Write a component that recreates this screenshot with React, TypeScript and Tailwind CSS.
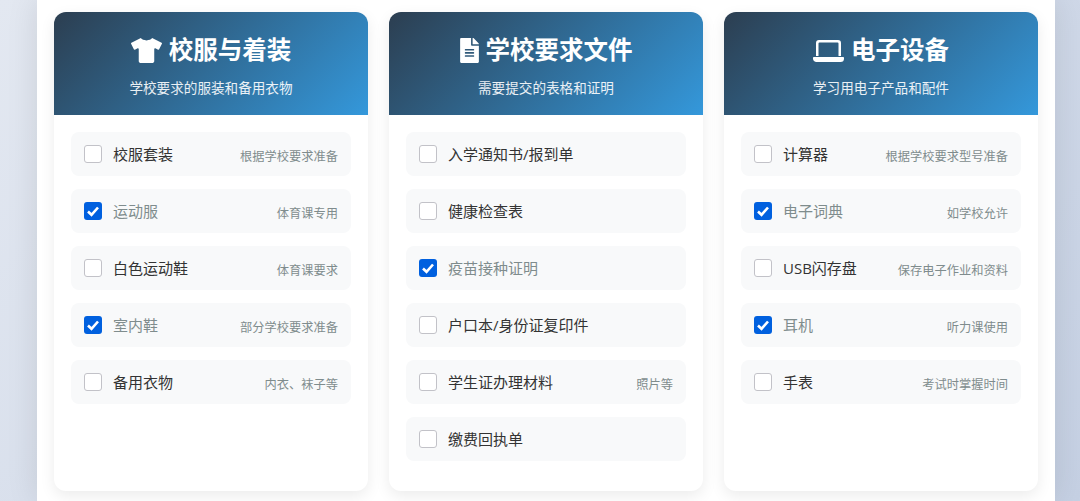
import { FaTshirt, FaFileAlt } from "react-icons/fa";

type Item = { name: string; note?: string; done?: boolean };

function LaptopIcon() {
  return (
    <svg viewBox="0 0 31 22" className="w-[31px] h-[22px] mt-[2px]" fill="currentColor">
      <path d="M6 0h19a3 3 0 0 1 3 3v13h-2.5V3.5a1 1 0 0 0-1-1h-18a1 1 0 0 0-1 1V16H3V3a3 3 0 0 1 3-3z" />
      <path d="M0.8 17h29.4c.45 0 .8.35.8.8v.7a3.5 3.5 0 0 1-3.5 3.5h-24.5A3.5 3.5 0 0 1 0 18.5v-.7c0-.45.35-.8.8-.8z" />
    </svg>
  );
}

const groups = [
  {
    icon: <FaTshirt className="w-[31px] h-[25px]" />,
    title: "校服与着装",
    sub: "学校要求的服装和备用衣物",
    items: [
      { name: "校服套装", note: "根据学校要求准备" },
      { name: "运动服", note: "体育课专用", done: true },
      { name: "白色运动鞋", note: "体育课要求" },
      { name: "室内鞋", note: "部分学校要求准备", done: true },
      { name: "备用衣物", note: "内衣、袜子等" },
    ] as Item[],
  },
  {
    icon: <FaFileAlt className="w-[19px] h-[25px]" />,
    title: "学校要求文件",
    sub: "需要提交的表格和证明",
    items: [
      { name: "入学通知书/报到单" },
      { name: "健康检查表" },
      { name: "疫苗接种证明", done: true },
      { name: "户口本/身份证复印件" },
      { name: "学生证办理材料", note: "照片等" },
      { name: "缴费回执单" },
    ] as Item[],
  },
  {
    icon: <LaptopIcon />,
    title: "电子设备",
    sub: "学习用电子产品和配件",
    items: [
      { name: "计算器", note: "根据学校要求型号准备" },
      { name: "电子词典", note: "如学校允许", done: true },
      { name: "USB闪存盘", note: "保存电子作业和资料" },
      { name: "耳机", note: "听力课使用", done: true },
      { name: "手表", note: "考试时掌握时间" },
    ] as Item[],
  },
];

function Box({ on }: { on?: boolean }) {
  if (on) {
    return (
      <span className="flex items-center justify-center w-[18px] h-[18px] shrink-0 rounded-[3px] bg-[#0060df]">
        <svg viewBox="0 0 18 18" className="w-[18px] h-[18px]" fill="none" stroke="white" strokeWidth="2.6">
          <path d="M4 9.5l3.5 3.3L14 5.5" />
        </svg>
      </span>
    );
  }
  return <span className="w-[18px] h-[18px] shrink-0 rounded-[3px] border border-[#c2c2c8] bg-white" />;
}

function Row({ item }: { item: Item }) {
  return (
    <div className="flex items-center h-11 rounded-lg bg-[#f8f9fa] pl-[13px] pr-[13px]">
      <Box on={item.done} />
      <span className={"ml-[11px] text-[15px] " + (item.done ? "text-[#7f8c8d]" : "text-[#333333]")}>{item.name}</span>
      {item.note && <span className="ml-auto mt-[7px] text-[12.25px] text-[#7f8c8d]">{item.note}</span>}
    </div>
  );
}

export default function App() {
  return (
    <div
      className="h-[501px] overflow-hidden bg-[linear-gradient(135deg,#e3e8f1,#c5d0e3)]"
      style={{ fontFamily: '"Open Sans", "Noto Sans CJK SC", sans-serif' }}
    >
      <div className="ml-[37px] mr-[25px] h-full bg-white shadow-[0_0_30px_rgba(0,0,0,0.1)] px-[17px] pt-3">
        <div className="grid grid-cols-3 gap-[21px]">
          {groups.map((g) => (
            <section
              key={g.title}
              className="h-[479px] rounded-xl bg-white overflow-hidden shadow-[0_5px_15px_rgba(0,0,0,0.08)]"
            >
              <header className="h-[103px] bg-[linear-gradient(135deg,#2c3e50,#3498db)] text-white text-center pt-5">
                <h2 className="flex items-center justify-center gap-[7px] text-[24.5px] font-bold leading-9">
                  {g.icon}
                  {g.title}
                </h2>
                <p className="mt-[10px] text-[13.6px] leading-5 text-white/90">{g.sub}</p>
              </header>
              <div className="flex flex-col gap-[13px] px-[17px] pt-[17px]">
                {g.items.map((it) => (
                  <Row key={it.name} item={it} />
                ))}
              </div>
            </section>
          ))}
        </div>
      </div>
    </div>
  );
}
